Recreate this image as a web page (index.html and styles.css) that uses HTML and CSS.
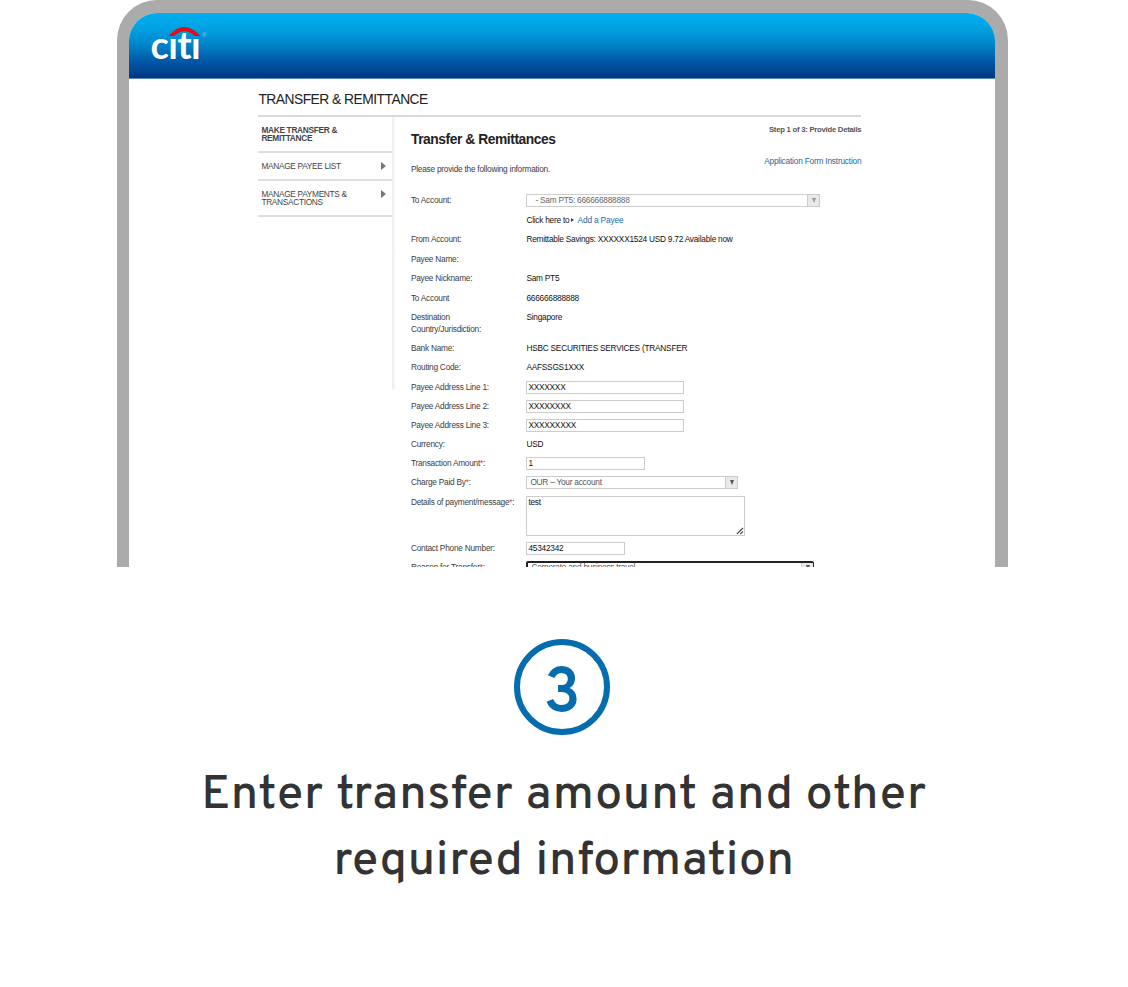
FILE: index.html
```html
<!DOCTYPE html>
<html lang="en">
<head>
<meta charset="utf-8">
<title>Transfer &amp; Remittance</title>
<link rel="stylesheet" href="styles.css">
</head>
<body>
<main class="slide">
  <div class="device">
    <div class="screen">
      <header class="banner">
        <svg class="logo" width="60" height="40" viewBox="149 24 60 40" role="img" aria-label="citi">
          <text class="logo-word" y="59" x="150.4 168.3 177.5 191">cıtı</text>
          <path d="M168.6 36 Q184 18 200.3 36 L195 36 Q184 26.5 174 36 Z" fill="#e30b17"/>
          <text class="logo-reg" x="202" y="37.3">®</text>
        </svg>
      </header>
      <div class="content">
        <h1 class="page-title">TRANSFER &amp; REMITTANCE</h1>
        <div class="columns">
          <nav class="side">
            <div class="side-item current">MAKE TRANSFER &amp;<br>REMITTANCE</div>
            <div class="side-item payee">MANAGE PAYEE LIST<i class="arrow"></i></div>
            <div class="side-item payments">MANAGE PAYMENTS &amp;<br>TRANSACTIONS<i class="arrow"></i></div>
          </nav>
          <section class="form">
            <div class="form-head">
              <div>
                <h2 class="form-title">Transfer &amp; Remittances</h2>
                <p class="intro">Please provide the following information.</p>
              </div>
              <div class="form-meta">
                <span class="step">Step 1 of 3: Provide Details</span>
                <span class="link instruction">Application Form Instruction</span>
              </div>
            </div>
            <div class="row first"><span class="label">To Account:</span><div class="select payee-select"><span>- Sam PT5: 666666888888</span><i class="drop"></i></div></div>
            <div class="row"><span class="label"></span><span class="value">Click here to <i class="mini"></i> <span class="link add">Add a Payee</span></span></div>
            <div class="row"><span class="label">From Account:</span><span class="value">Remittable Savings: XXXXXX1524 USD 9.72 Available now</span></div>
            <div class="row"><span class="label">Payee Name:</span></div>
            <div class="row"><span class="label">Payee Nickname:</span><span class="value">Sam PT5</span></div>
            <div class="row"><span class="label">To Account</span><span class="value">666666888888</span></div>
            <div class="row tall"><span class="label">Destination<br>Country/Jurisdiction:</span><span class="value">Singapore</span></div>
            <div class="row"><span class="label">Bank Name:</span><span class="value">HSBC SECURITIES SERVICES (TRANSFER</span></div>
            <div class="row"><span class="label">Routing Code:</span><span class="value">AAFSSGS1XXX</span></div>
            <div class="row field"><span class="label">Payee Address Line 1:</span><div class="input address">XXXXXXX</div></div>
            <div class="row field"><span class="label">Payee Address Line 2:</span><div class="input address">XXXXXXXX</div></div>
            <div class="row field"><span class="label">Payee Address Line 3:</span><div class="input address">XXXXXXXXX</div></div>
            <div class="row"><span class="label">Currency:</span><span class="value">USD</span></div>
            <div class="row field"><span class="label">Transaction Amount<b>*</b>:</span><div class="input amount">1</div></div>
            <div class="row"><span class="label">Charge Paid By<b>*</b>:</span><div class="select charge"><span>OUR – Your account</span><i class="drop"></i></div></div>
            <div class="row message"><span class="label">Details of payment/message<b>*</b>:</span><div class="input area">test<svg class="grip" width="8" height="8" viewBox="0 0 8 8"><path d="M.8 7.2 L7 1 M4.2 7.2 L7 4.4" stroke="#444" stroke-width="1.2" fill="none"/></svg></div></div>
            <div class="row field"><span class="label">Contact Phone Number:</span><div class="input phone">45342342</div></div>
            <div class="row"><span class="label">Reason for Transfer<b>*</b>:</span><div class="select reason"><span>Corporate and business travel</span><i class="drop"></i></div></div>
          </section>
        </div>
      </div>
    </div>
  </div>
  <div class="badge"><span>3</span></div>
  <p class="caption"><span class="line-one">Enter transfer amount and other</span><br><span class="line-two">required information</span></p>
</main>
</body>
</html>
```
FILE: styles.css
```css
* { box-sizing: border-box; }
body { margin: 0; background: #fff; font-family: "Liberation Sans", Arial, sans-serif; }
.slide { width: 1128px; height: 987px; display: flex; flex-direction: column; align-items: center; overflow: hidden; }
.device { width: 891px; height: 567px; flex: none; margin-right: 3px; padding: 13px 13px 0 12px; background: #ababab; border-radius: 40px 40px 0 0; overflow: hidden; }
.screen { height: 554px; background: #fff; border-radius: 28px 28px 0 0; overflow: hidden; }
.banner { height: 66px; padding: 11px 0 0 20px; background: linear-gradient(#00aeef 0%, #00a3e4 22%, #0086ca 48%, #0055a4 76%, #003b82 98%); border-bottom: 1px solid #5c87bb; }
.logo { display: block; overflow: visible; }
.logo-word { font: 700 38px Lato, sans-serif; fill: #fff; }
.logo-reg { font: 6px "Liberation Sans", sans-serif; fill: #9fd8f3; }
.content { width: 603px; margin-left: 129.4px; }
.page-title { height: 38px; margin: 0; padding-top: 11.5px; border-bottom: 2px solid #d9d9d9; font-size: 13.8px; line-height: 17px; font-weight: 400; letter-spacing: -.5px; color: #222; white-space: nowrap; }
.columns { display: flex; }
.side { width: 134px; flex: none; font-size: 8.3px; line-height: 8px; letter-spacing: -.3px; color: #444; }
.side-item { position: relative; padding: 8.5px 3px 0; border-bottom: 2px solid #dedede; white-space: nowrap; }
.current { height: 36px; font-weight: 700; }
.payee { height: 28px; }
.payments { height: 35.5px; }
.arrow { position: absolute; right: 6px; top: 8.5px; border-left: 5px solid #777; border-top: 4px solid transparent; border-bottom: 4px solid transparent; }
.form { width: 469px; height: 449px; padding-left: 18.5px; font-size: 8.3px; line-height: 11.5px; letter-spacing: -.24px; color: #3c3c3c; background: linear-gradient(90deg, #ececec, #fff) 0 0 / 4px 272px no-repeat; }
.form-head { display: flex; justify-content: space-between; height: 78px; }
.form-title { margin: 15.4px 0 0; font-size: 13.8px; line-height: 16px; letter-spacing: -.43px; color: #222; white-space: nowrap; }
.intro { margin: 16px 0 0; }
.form-meta { display: flex; flex-direction: column; align-items: flex-end; padding-top: 7px; }
.step { font-size: 7.7px; font-weight: 700; color: #555; }
.instruction { margin-top: 20.5px; letter-spacing: -.2px; }
.link { color: #1c67a5; }
.add { margin-left: 1px; letter-spacing: -.15px; }
.row { display: flex; height: 19.5px; white-space: nowrap; }
.tall { height: 30.5px; }
.message { height: 46px; }
.field { height: 19px; }
.label { width: 115.5px; flex: none; }
.label b { color: #e33; font-weight: 400; }
.value { color: #111; }
.mini { display: inline-block; border-left: 3px solid #444; border-top: 2px solid transparent; border-bottom: 2px solid transparent; vertical-align: 1px; }
.input { height: 13px; margin-top: -1px; border: 1px solid #ccc; padding: 0 1px; line-height: 11px; color: #111; }
.address { width: 158px; }
.amount { width: 119px; }
.phone { width: 99px; }
.area { position: relative; width: 219px; height: 40px; }
.grip { position: absolute; right: 0; bottom: 0; }
.select { display: flex; justify-content: space-between; height: 13px; margin-top: -1px; border: 1px solid #ccc; padding-left: 3px; line-height: 11px; color: #555; }
.drop { display: flex; width: 12px; align-items: center; justify-content: center; background: #e9e9e9; border-left: 1px solid #ccc; }
.drop::before { content: ""; border-top: 5px solid #555; border-left: 2.5px solid transparent; border-right: 2.5px solid transparent; }
.payee-select { width: 294px; padding-left: 8px; color: #666; }
.payee-select .drop::before { border-top-color: #999; }
.charge { width: 212px; }
.reason { width: 288px; border: 2px solid #222; border-radius: 2px; border-right-width: 1px; line-height: 9px; }
.badge { width: 96px; height: 96px; flex: none; margin: 72px 4px 0 0; padding-top: 18px; border: 6px solid #056dae; border-radius: 50%; display: flex; align-items: center; justify-content: center; color: #056dae; font: 600 62px/1 Overpass, Roboto, sans-serif; }
.caption { margin: 28px 0 0; font: 500 48px/66px Overpass, Roboto, sans-serif; color: #333; text-align: center; white-space: nowrap; letter-spacing: .7px; }
```
